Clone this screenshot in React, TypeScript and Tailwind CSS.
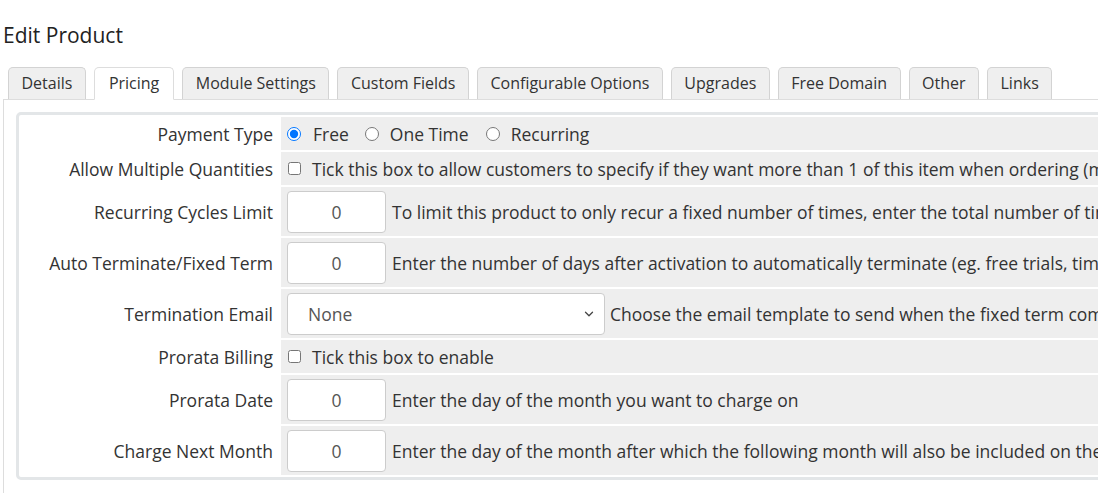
import React from 'react';
import { ChevronDown } from 'lucide-react';

const tabs = ['Details', 'Pricing', 'Module Settings', 'Custom Fields', 'Configurable Options', 'Upgrades', 'Free Domain', 'Other', 'Links'];

function Row({ label, tall, children }: { label: string; tall?: boolean; children: React.ReactNode }) {
    return (
        <div className={`flex gap-[2px] ${tall ? 'h-[49px]' : 'h-[33px]'}`}>
            <div className="w-[258px] shrink-0 flex items-center justify-end pr-[6px] text-[#333]">{label}</div>
            <div className="flex-1 bg-[#eeeeee] flex items-center pl-[6px] whitespace-nowrap text-[#333]">{children}</div>
        </div>
    );
}

function NumberBox() {
    return (
        <input
            defaultValue="0"
            className="w-[99px] h-[42px] bg-white border border-[#ccc] rounded-[4px] text-center text-[#555] outline-none shrink-0"
        />
    );
}

export default function App() {
    return (
        <div className="w-[1098px] h-[493px] overflow-hidden bg-white text-[16px] leading-6" style={{ fontFamily: '"Open Sans", "Noto Sans", sans-serif' }}>
            <div className="w-[1400px] pl-[3px]">
                <h1 className="mt-[20px] text-[21px] leading-[30px] text-[#222]">Edit Product</h1>

                {/* Tabs */}
                <ul className="mt-[17px] flex gap-[8px] pl-[5px] border-b border-[#ddd]">
                    {tabs.map((t) =>
                        t === 'Pricing' ? (
                            <li key={t} className="-mb-px px-[14px] pt-[3px] pb-[4px] bg-white border border-[#ddd] border-b-white rounded-t-[5px] text-[#333]">
                                {t}
                            </li>
                        ) : (
                            <li key={t} className="px-[12.5px] pt-[3px] pb-[3px] bg-[#efefef] border border-[#d3d3d3] border-b-0 rounded-t-[5px] text-[#333]">
                                {t}
                            </li>
                        )
                    )}
                </ul>

                {/* Tab content */}
                <div className="border-l border-[#ddd] pl-[12px] pt-[12px] pb-[20px] text-[17.5px]">
                    <div className="border-[3px] border-[#e3e6e8] rounded-[5px] p-[2px] flex flex-col gap-[2px]">
                        <Row label="Payment Type">
                            <label className="flex items-center">
                                <input type="radio" name="pt" defaultChecked className="w-[14px] h-[14px] m-0" />
                                <span className="ml-[12px]">Free</span>
                            </label>
                            <label className="flex items-center ml-[16px]">
                                <input type="radio" name="pt" className="w-[14px] h-[14px] m-0" />
                                <span className="ml-[11px]">One Time</span>
                            </label>
                            <label className="flex items-center ml-[17px]">
                                <input type="radio" name="pt" className="w-[14px] h-[14px] m-0" />
                                <span className="ml-[11px]">Recurring</span>
                            </label>
                        </Row>
                        <Row label="Allow Multiple Quantities">
                            <input type="checkbox" className="w-[13px] h-[13px] m-0 ml-[1px]" />
                            <span className="ml-[11px]">Tick this box to allow customers to specify if they want more than 1 of this item when ordering (must have Stock Control enabled)</span>
                        </Row>
                        <Row label="Recurring Cycles Limit" tall>
                            <NumberBox />
                            <span className="ml-[6px]">To limit this product to only recur a fixed number of times, enter the total number of times to invoice (0 = Unlimited)</span>
                        </Row>
                        <Row label="Auto Terminate/Fixed Term" tall>
                            <NumberBox />
                            <span className="ml-[6px]">Enter the number of days after activation to automatically terminate (eg. free trials, time limited products, etc...)</span>
                        </Row>
                        <Row label="Termination Email" tall>
                            <div className="relative w-[318px] h-[42px] shrink-0">
                                <select className="appearance-none w-full h-full bg-white border border-[#ccc] rounded-[4px] pl-[20px] text-[#555] outline-none">
                                    <option>None</option>
                                </select>
                                <ChevronDown size={14} strokeWidth={2.2} className="absolute right-[9px] top-[14px] text-[#444] pointer-events-none" />
                            </div>
                            <span className="ml-[5px]">Choose the email template to send when the fixed term comes to an end</span>
                        </Row>
                        <Row label="Prorata Billing">
                            <input type="checkbox" className="w-[13px] h-[13px] m-0 ml-[1px]" />
                            <span className="ml-[11px]">Tick this box to enable</span>
                        </Row>
                        <Row label="Prorata Date" tall>
                            <NumberBox />
                            <span className="ml-[6px]">Enter the day of the month you want to charge on</span>
                        </Row>
                        <Row label="Charge Next Month" tall>
                            <NumberBox />
                            <span className="ml-[6px]">Enter the day of the month after which the following month will also be included on the first invoice</span>
                        </Row>
                    </div>
                </div>
            </div>
        </div>
    );
}
